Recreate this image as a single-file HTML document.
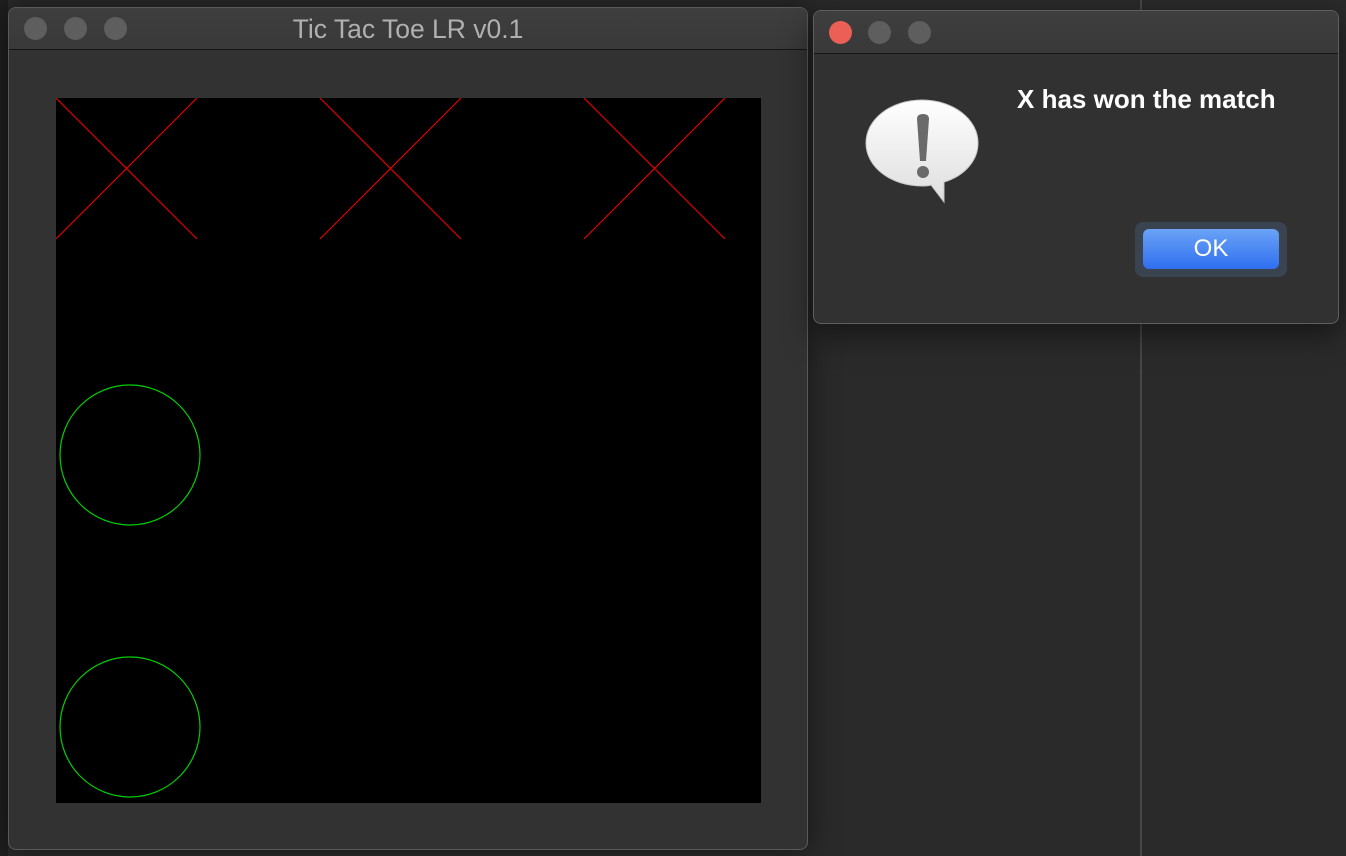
<!DOCTYPE html>
<html><head><meta charset="utf-8"><style>
html,body{margin:0;padding:0;width:1346px;height:856px;overflow:hidden;background:#2a2a2a;font-family:"Liberation Sans",sans-serif;}
.vline{position:absolute;left:1140px;top:0;width:2px;height:856px;background:#474747;}
.leftbg{position:absolute;left:0;top:0;width:8px;height:856px;background:#1f1f1f;}
.win{position:absolute;left:8px;top:7px;width:798px;height:841px;background:#323232;border:1px solid #5a5a5a;border-radius:8px;box-shadow:0 0 30px rgba(0,0,0,.5);overflow:hidden;}
.tb{position:absolute;left:0;top:0;right:0;height:41px;background:linear-gradient(#3e3e3e,#393939);border-bottom:1px solid #141414;}
.dot{position:absolute;width:23px;height:23px;border-radius:50%;background:#5e5e5e;top:9px;}
.title{position:absolute;left:0;right:0;top:6px;text-align:center;color:#b0b0b0;font-size:26.5px;}
.dlg{position:absolute;left:813px;top:10px;width:524px;height:312px;background:#313131;border:1px solid #5e5e5e;border-radius:8px;box-shadow:0 10px 30px rgba(0,0,0,.5);overflow:hidden;}
.dlg .tb{height:42px;}
.msg{position:absolute;left:203px;top:73px;color:#fff;font-weight:bold;font-size:26px;}
.okw{position:absolute;left:321px;top:211px;width:152px;height:55px;border-radius:8px;background:#3a4350;}
.ok{position:absolute;left:8px;top:7px;width:136px;height:40px;border-radius:6px;background:linear-gradient(#6aa3f5,#2f6ff0);color:#fff;font-size:24px;text-align:center;line-height:40px;}
</style></head><body>
<div class="leftbg"></div>
<div class="vline"></div>
<div class="win">
  <div class="tb">
    <div class="dot" style="left:15px"></div>
    <div class="dot" style="left:55px"></div>
    <div class="dot" style="left:95px"></div>
    <div class="title">Tic Tac Toe LR v0.1</div>
  </div>
  <svg style="position:absolute;left:47px;top:90px" width="705" height="705">
    <rect width="705" height="705" fill="#000"/>
    <g stroke="#e00000" stroke-width="1.2">
      <line x1="0" y1="0" x2="141" y2="141"/><line x1="141" y1="0" x2="0" y2="141"/>
      <line x1="264" y1="0" x2="405" y2="141"/><line x1="405" y1="0" x2="264" y2="141"/>
      <line x1="528" y1="0" x2="669" y2="141"/><line x1="669" y1="0" x2="528" y2="141"/>
    </g>
    <g stroke="#00d000" stroke-width="1.2" fill="none">
      <circle cx="74" cy="357" r="70"/>
      <circle cx="74" cy="629" r="70"/>
    </g>
  </svg>
</div>
<div class="dlg">
  <div class="tb">
    <div class="dot" style="left:15px;top:10px;background:#ec5f56"></div>
    <div class="dot" style="left:54px;top:10px"></div>
    <div class="dot" style="left:94px;top:10px"></div>
  </div>
  <svg style="position:absolute;left:50px;top:88px" width="120" height="110" viewBox="0 0 120 110">
    <defs><linearGradient id="g" x1="0" y1="0" x2="0" y2="1"><stop offset="0" stop-color="#fff"/><stop offset="1" stop-color="#dedede"/></linearGradient></defs>
    <path d="M58 1 C27 1 2 20 2 44 C2 68 27 87 58 87 C61 87 64 87 67 86 L80 103 L80 83 C100 77 114 62 114 44 C114 20 89 1 58 1 Z" fill="url(#g)" stroke="#c8c8c8" stroke-width="1"/>
    <path d="M53 20 Q53 15 59 15 Q65 15 65 20 L62 62 L56 62 Z" fill="#6a6a6a"/>
    <circle cx="59" cy="73" r="6" fill="#6a6a6a"/>
  </svg>
  <div class="msg">X has won the match</div>
  <div class="okw"><div class="ok">OK</div></div>
</div>
</body></html>
